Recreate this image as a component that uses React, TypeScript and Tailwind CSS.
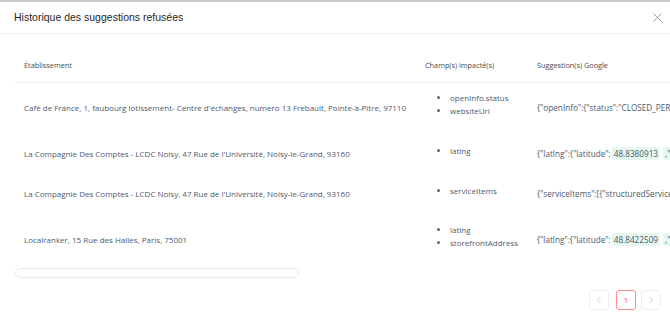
import React from "react";

const hl = "ml-[1px] px-[2px] py-[1px] rounded-[2px] bg-[#e6f7ee]";

const rows = [
  {
    name: "Café de France, 1, faubourg lotissement- Centre d'échanges, numero 13 Frebault, Pointe-à-Pitre, 97110",
    fields: ["openInfo.status", "websiteUri"],
    sugg: <span>{'{"openInfo":{"status":"CLOSED_PERMANENTLY"},"websiteUri":"https://example.com"}'}</span>,
    tall: true,
  },
  {
    name: "La Compagnie Des Comptes - LCDC Noisy, 47 Rue de l'Université, Noisy-le-Grand, 93160",
    fields: ["latlng"],
    sugg: (
      <span>
        {'{"latlng":{"latitude":'}
        <span className={hl}>48.8380913</span>
        <span className="ml-[3px] px-[2px] py-[1px] rounded-[2px] bg-[#e6f7ee]">{',"longitude": 2.5559'}</span>
      </span>
    ),
    tall: false,
  },
  {
    name: "La Compagnie Des Comptes - LCDC Noisy, 47 Rue de l'Université, Noisy-le-Grand, 93160",
    fields: ["serviceItems"],
    sugg: <span>{'{"serviceItems":[{"structuredServiceItem":{"serviceTypeId":"job_type_id"}}]}'}</span>,
    tall: false,
  },
  {
    name: "Localranker, 15 Rue des Halles, Paris, 75001",
    fields: ["latlng", "storefrontAddress"],
    sugg: (
      <span>
        {'{"latlng":{"latitude":'}
        <span className={hl}>48.8422509</span>
        <span className="ml-[3px] px-[2px] py-[1px] rounded-[2px] bg-[#e6f7ee]">{',"longitude": 2.3456'}</span>
      </span>
    ),
    tall: true,
  },
];

export default function App() {
  return (
    <div className="w-[670px] h-[326px] bg-white overflow-hidden border-t-2 border-[#c9c9c9] relative">
      <div className="h-[32px] px-[14px] flex items-center justify-between border-b border-[#f0f0f0]">
        <div className="text-[10.5px] text-[#1f1f1f] font-['Liberation_Sans',Arial,sans-serif]">
          Historique des suggestions refusées
        </div>
        <svg width="9" height="9" viewBox="0 0 9 9" className="mr-[-6px]">
          <path d="M0.5 0.5L8.5 8.5M8.5 0.5L0.5 8.5" stroke="#9a9a9a" strokeWidth="1" />
        </svg>
      </div>
      <div className="px-[15px] pt-[16px] font-['Open_Sans',sans-serif]">
        <div className="w-[655px] overflow-hidden">
          <table className="border-collapse table-fixed w-[900px]">
            <colgroup>
              <col className="w-[401px]" />
              <col className="w-[112px]" />
              <col className="w-[387px]" />
            </colgroup>
            <thead>
              <tr className="h-[32px] border-b border-[#f0f0f0]">
                <th className="text-left font-normal text-[7.3px] text-[#4a4a4a] px-[9px]">Établissement</th>
                <th className="text-left font-normal text-[7.3px] text-[#4a4a4a] px-[9px]">Champ(s) impacté(s)</th>
                <th className="text-left font-normal text-[7.3px] text-[#4a4a4a] px-[9px]">Suggestion(s) Google</th>
              </tr>
            </thead>
            <tbody>
              {rows.map((r, i) => (
                <tr key={i} className={r.tall ? "h-[52px]" : "h-[40px]"}>
                  <td className="px-[9px] align-middle text-[8px] text-[#4e5a6e] whitespace-nowrap">{r.name}</td>
                  <td className="px-[9px] align-middle text-[8px] text-[#4e5a6e]">
                    <ul className="list-disc pl-[25px] mb-[8px] leading-[13px] marker:text-[#5b6579] whitespace-nowrap">
                      {r.fields.map((f) => (
                        <li key={f}>{f}</li>
                      ))}
                    </ul>
                  </td>
                  <td className="px-[9px] align-middle text-[8.2px] text-[#4e5a6e] whitespace-nowrap">{r.sugg}</td>
                </tr>
              ))}
            </tbody>
          </table>
        </div>
        <div className="mt-[2px] h-[10px] w-[284px] rounded-full border border-[#ebebeb] bg-white" />
        <div className="w-[646px] flex justify-end mt-[12px]">
          <div className="w-[20px] h-[20px] mr-[7px] rounded-[3px] border border-[#eeeeee] flex items-center justify-center">
            <svg width="6" height="8" viewBox="0 0 6 8"><path d="M4.5 1L1.5 4L4.5 7" fill="none" stroke="#cfcfcf" strokeWidth="1" /></svg>
          </div>
          <div className="w-[20px] h-[20px] mr-[5px] rounded-[3px] border border-[#ff8a8a] flex items-center justify-center text-[8px] text-[#ff4d4f]">1</div>
          <div className="w-[20px] h-[20px] rounded-[3px] border border-[#eeeeee] flex items-center justify-center">
            <svg width="6" height="8" viewBox="0 0 6 8"><path d="M1.5 1L4.5 4L1.5 7" fill="none" stroke="#cfcfcf" strokeWidth="1" /></svg>
          </div>
        </div>
      </div>
    </div>
  );
}
